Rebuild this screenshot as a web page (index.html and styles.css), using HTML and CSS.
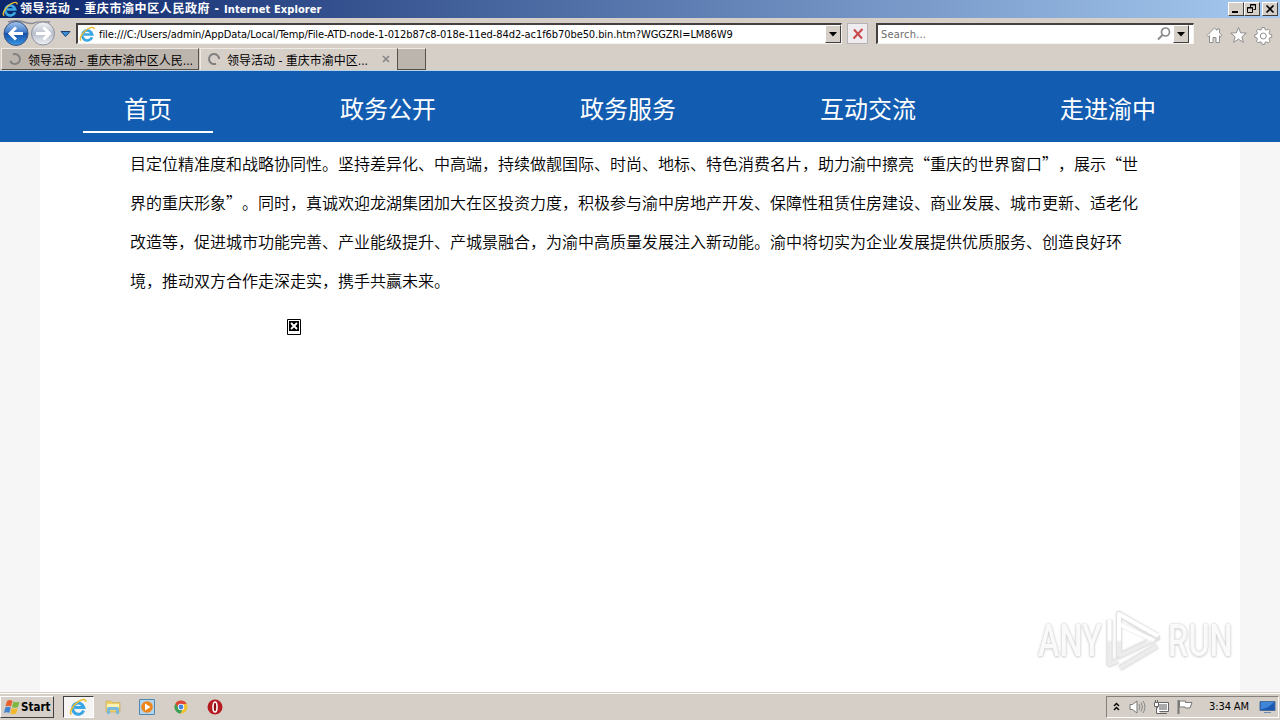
FILE: index.html
```
<!DOCTYPE html>
<html lang="zh-CN">
<head>
    <meta charset="UTF-8">
    <title>领导活动 - 重庆市渝中区人民政府</title>
    <link rel="stylesheet" href="styles.css">
</head>
<body>
    <svg width="0" height="0" class="defs">
        <defs>
            <linearGradient id="blue" x1="0" y1="0" x2="0" y2="1">
                <stop offset="0" stop-color="#a9c8ee"/>
                <stop offset=".45" stop-color="#3c78c8"/>
                <stop offset=".5" stop-color="#1650a8"/>
                <stop offset="1" stop-color="#3a9ae6"/>
            </linearGradient>
            <linearGradient id="silver" x1="0" y1="0" x2="0" y2="1">
                <stop offset="0" stop-color="#f4f5f8"/>
                <stop offset=".5" stop-color="#b9bfcc"/>
                <stop offset="1" stop-color="#eef1f6"/>
            </linearGradient>
            <symbol id="ie" viewBox="0 0 16 16">
                <path d="M13 11.200A5 5 0 1 1 13.200 8.500H5" fill="none" stroke="#3aa6e4" stroke-width="2.700"/>
                <path d="M2.200 14.600C-.6 13 3.600 6 8.600 3 12 .9 15.200.6 15 3.400" fill="none" stroke="#f0bd2c" stroke-width="1.400"/>
            </symbol>
        </defs>
    </svg>

    <div class="titlebar">
        <svg class="ie-icon" width="16" height="16"><use href="#ie"/></svg>
        <span class="title">领导活动 - 重庆市渝中区人民政府 - <span class="app-name">Internet Explorer</span></span>
        <div class="window-buttons">
            <span class="win-btn"><svg width="12" height="10"><path d="M2 8h6" stroke="#000" stroke-width="2"/></svg></span>
            <span class="win-btn"><svg width="12" height="10"><path d="M4.500 3.500v-3h5v5h-2M4 1h6M1.500 3.500h5v5h-5zM1 4h6" fill="none" stroke="#000"/></svg></span>
            <span class="win-btn close"><svg width="12" height="10"><path d="M2.500 1.500l7 7M9.500 1.500l-7 7" stroke="#000" stroke-width="1.700"/></svg></span>
        </div>
    </div>

    <div class="toolbar">
        <svg class="nav-arrows" width="76" height="30" viewBox="0 0 76 30">
            <path d="M8 4Q16 1.500 24 4t10 1 16-1" fill="none" stroke="#8a8a90" stroke-width="1.500"/>
            <circle cx="16" cy="15.500" r="12" fill="url(#blue)" stroke="#40547c"/>
            <path d="M23 15.500H11M16 9.500l-6 6 6 6" fill="none" stroke="#fff" stroke-width="3"/>
            <circle cx="43" cy="15.500" r="11.500" fill="url(#silver)" stroke="#8e929c"/>
            <path d="M36 15.500h12M43.500 9.500l6 6-6 6" fill="none" stroke="#fff" stroke-width="3"/>
            <path d="M61 13.500h9l-4.500 5z" fill="#3b8fd6" stroke="#1d3f70"/>
        </svg>
        <div class="address">
            <svg class="address-icon" width="16" height="16"><use href="#ie"/></svg>
            <span class="url">file:///C:/Users/admin/AppData/Local/Temp/File-ATD-node-1-012b87c8-018e-11ed-84d2-ac1f6b70be50.bin.htm?WGGZRI=LM86W9</span>
            <span class="drop"><svg width="8" height="5"><path d="M0 0h8L4 4.500z"/></svg></span>
        </div>
        <div class="stop"><svg width="12" height="12"><path d="M2 1.500l8 9M10.500 1L1.500 10.500" stroke="#c8484c" stroke-width="2" fill="none"/></svg></div>
        <div class="search">
            <span class="search-text">Search...</span>
            <svg width="14" height="14"><circle cx="8.500" cy="5" r="4" fill="#fff" stroke="#8a8a8a" stroke-width="1.700"/><path d="M5.500 8L1 12.500" stroke="#8a8a8a" stroke-width="2"/></svg>
            <span class="drop"><svg width="8" height="5"><path d="M0 0h8L4 4.500z"/></svg></span>
        </div>
        <svg class="tools" width="70" height="20" viewBox="0 0 70 20">
            <g fill="#fff" stroke="#8f8f8f" stroke-linejoin="round">
                <path d="M1 10.500L8.500 3l2.500 2.300V4h2.500v3.800L16 10.500l-1.200 1.200-1.300-1V17.500H10v-5H7v5H3.500v-6.800l-1.300 1z"/>
                <path d="M32.500 2.500l2.100 5.300 5.700.3-4.400 3.600 1.500 5.600-4.900-3.100-4.900 3.100 1.500-5.600-4.400-3.600 5.700-.3z"/>
                <path d="M56 2.500h2.500l.5 2 1.500.6 1.900-1 1.700 1.700-1 1.900.6 1.500 2 .5v2.500l-2 .5-.6 1.500 1 1.900-1.700 1.700-1.900-1-1.500.6-.5 2H56l-.5-2-1.500-.6-1.900 1-1.700-1.700 1-1.900-.6-1.500-2-.5V9.700l2-.5.6-1.500-1-1.900 1.700-1.700 1.900 1 1.500-.6z"/>
                <circle cx="57.300" cy="11" r="3"/>
            </g>
        </svg>
    </div>

    <div class="tabs">
        <div class="tab inactive">
            <svg width="14" height="14"><path d="M2.300 9A5 5 0 1 0 5 2.400" fill="none" stroke="#808080" stroke-width="2"/></svg>
            <span class="tab-title">领导活动 - 重庆市渝中区人民...</span>
        </div>
        <div class="tab active">
            <svg width="14" height="14"><path d="M9 11.600A5 5 0 1 1 12 7" fill="none" stroke="#808080" stroke-width="2"/></svg>
            <span class="tab-title">领导活动 - 重庆市渝中区...</span>
            <svg class="tab-close" width="8" height="8"><path d="M1 1l6 6M7 1L1 7" stroke="#888" stroke-width="1.700"/></svg>
        </div>
        <div class="new-tab"></div>
    </div>

    <div class="page">
        <nav>
            <ul>
                <li class="current"><a>首页</a></li>
                <li><a>政务公开</a></li>
                <li><a>政务服务</a></li>
                <li><a>互动交流</a></li>
                <li><a>走进渝中</a></li>
            </ul>
        </nav>
        <main>
            <p class="article">目定位精准度和战略协同性。坚持差异化、中高端，持续做靓国际、时尚、地标、特色消费名片，助力渝中擦亮“重庆的世界窗口”，展示“世<br>界的重庆形象”。同时，真诚欢迎龙湖集团加大在区投资力度，积极参与渝中房地产开发、保障性租赁住房建设、商业发展、城市更新、适老化<br>改造等，促进城市功能完善、产业能级提升、产城景融合，为渝中高质量发展注入新动能。渝中将切实为企业发展提供优质服务、创造良好环<br>境，推动双方合作走深走实，携手共赢未来。</p>
            <svg class="broken" width="14" height="16"><path d="M.5.500h13v15H.5z" fill="#fff" stroke="#000"/><path d="M2 2h10v10H2z"/><path d="M4 4l6 6M10 4l-6 6" stroke="#fff" stroke-width="1.800"/></svg>
        </main>
        <div class="watermark">
            <span>ANY</span>
            <svg width="60" height="64" viewBox="0 0 60 64" fill="none" stroke-linejoin="round">
                <linearGradient id="fade" gradientUnits="userSpaceOnUse" x1="0" y1="0" x2="0" y2="64">
                    <stop offset=".48" stop-color="#fff"/>
                    <stop offset=".52" stop-color="#ececec"/>
                </linearGradient>
                <g stroke="#e2e2e2" stroke-width="6">
                    <path d="M14 5v42l38-18zM14 5l38 22M4.500 11v44l8-3M15 59l37-22"/>
                </g>
                <g stroke="url(#fade)" stroke-width="4">
                    <path d="M14 47V5l39 22M14 15l34 16-34 16M4.500 11v44l8-3M15 59l37-22"/>
                </g>
            </svg>
            <span>RUN</span>
        </div>
    </div>

    <div class="taskbar">
        <div class="start">
            <svg width="17" height="16" viewBox="0 0 17 16">
                <path d="M3 2q3-2 5.500 0L7 7.500Q4.500 6 1.500 7.500z" fill="#e8602c"/>
                <path d="M9.500 2.500q3 1.700 6 0L14 8q-3 1.500-6 0z" fill="#7cb83c"/>
                <path d="M1.300 8.500q3-1.500 5.500 0L5.300 14Q3 12.500 0 14z" fill="#4285d0"/>
                <path d="M7.700 9q3 1.500 6 0l-1.500 5.500q-3 1.500-6 0z" fill="#f3b92c"/>
            </svg>
            <span>Start</span>
        </div>
        <div class="task-active"><svg width="18" height="18"><use href="#ie"/></svg></div>
        <svg class="launch" width="16" height="16">
            <path d="M1 2h5l1 1.500h8V13H1z" fill="#f0cf68" stroke="#c6a650" stroke-width=".6"/>
            <path d="M2 5h12v4H2z" fill="#fbf0b6"/>
            <path d="M2 15V9.500Q2 8 3.500 8h9Q14 8 14 9.500V15h-3v-4H5v4z" fill="#79b9dc"/>
        </svg>
        <svg class="launch" width="16" height="16">
            <path d="M.5.500h15v15H.5z" fill="#b4d4ea" stroke="#4d88b5"/>
            <circle cx="8" cy="8" r="5.800" fill="#ef861c"/><path d="M6 4.500v7L11.500 8z" fill="#fff"/>
        </svg>
        <svg class="launch" width="16" height="16">
            <circle cx="8" cy="8" r="6.500" fill="#f2c12e"/>
            <path d="M2.400 4.700A6.500 6.500 0 0 1 13.600 4.700L8 5.500 5.500 9z" fill="#dc4437"/>
            <path d="M2.400 4.700A6.500 6.500 0 0 0 7.500 14.500L10 9.500 6 9.500z" fill="#3b9d57"/>
            <circle cx="8" cy="8" r="3.200" fill="#fff"/><circle cx="8" cy="8" r="2.400" fill="#4682e0"/>
        </svg>
        <svg class="launch" width="16" height="16">
            <circle cx="8" cy="8" r="7.500" fill="#b51b20"/><ellipse cx="8" cy="8" rx="2" ry="5" fill="#8d0c12" stroke="#fff" stroke-width="1.600"/>
        </svg>
        <div class="tray">
            <svg class="chevrons" width="7" height="9"><path d="M1 4l2.500-2.500L6 4M1 8l2.500-2.500L6 8" fill="none" stroke="#000" stroke-width="1.400"/></svg>
            <svg class="sound" width="17" height="16"><path d="M1 5.500h2.500L8 2v12l-4.500-3.500H1z" fill="#fff" stroke="#777"/><path d="M10 5q2 3 0 6M12 3.500q3 4.500 0 9M14 2q4 6 0 12" fill="none" stroke="#888"/></svg>
            <svg class="network" width="17" height="16"><path d="M4.500 3.500h11v9h-11z" fill="#fff" stroke="#666"/><path d="M6 5h8v6H6z" fill="#aaa"/><path d="M1.500 3.500h4v4h-4zM2.500 1v2.500M4.500 1v2.500M3.500 7.500v7h4M7 14.500h7" fill="#fff" stroke="#666"/></svg>
            <svg class="flag" width="16" height="16"><path d="M1.500 1v14" stroke="#777" stroke-width="2"/><path d="M2.500 2h6v1.500h6.500l-2 5.500H8.500L8 8H2.500z" fill="#fff" stroke="#777"/></svg>
            <span class="clock">3:34 AM</span>
            <svg class="desktop" width="17" height="14"><path d="M1 1.500h15v9H1z" fill="#1c57b0" stroke="#486ca0"/><path d="M2 9.500Q10 8 15 2H2z" fill="#3f86d8"/><path d="M5 12.500h7" stroke="#6c8bb0"/></svg>
        </div>
    </div>
</body>
</html>
```
FILE: styles.css
```
* {
    box-sizing: border-box;
}
body {
    margin: 0;
    width: 1280px;
    height: 720px;
    overflow: hidden;
    display: flex;
    flex-direction: column;
    background-color: #d5cfc8;
    color: #000;
    font-family: "DejaVu Sans Condensed", "Noto Sans CJK SC", sans-serif;
    font-size: 11px;
}
svg {
    display: block;
    flex: none;
}
.defs {
    position: absolute;
}
span {
    white-space: nowrap;
}
.titlebar {
    height: 18px;
    flex: none;
    display: flex;
    align-items: center;
    padding: 0 2px;
    background: linear-gradient(to right, #0b256b, #a6caf0);
    color: #fff;
}
.title {
    margin-left: 2px;
    font-weight: bold;
    font-size: 12px;
    line-height: 18px;
    letter-spacing: 0.6px;
}
.app-name {
    font-size: 11px;
    letter-spacing: 0.1px;
}
.window-buttons {
    margin-left: auto;
    display: flex;
}
.win-btn {
    width: 16px;
    height: 14px;
    padding: 1px;
    background-color: #d5cfc8;
    border: 1px solid;
    border-color: #fff #404040 #404040 #fff;
}
.close {
    margin-left: 2px;
}
.toolbar {
    height: 30px;
    flex: none;
    display: flex;
    align-items: flex-start;
}
.address, .search {
    display: flex;
    align-items: center;
    height: 21px;
    margin-top: 5px;
    background-color: #fff;
    border: 1px solid #f5f2ee;
    border-top: 2px solid #46403e;
    border-left: 2px solid #46403e;
}
.address {
    width: 766px;
    padding-left: 1px;
}
.url {
    margin-left: 4px;
    width: 635px;
    letter-spacing: -0.08px;
}
.drop {
    width: 16px;
    height: 18px;
    display: flex;
    align-items: center;
    justify-content: center;
    margin-left: auto;
    background-color: #d5cfc8;
    border: 1px solid;
    border-color: #fff #404040 #404040 #fff;
}
.stop {
    width: 21px;
    height: 21px;
    margin: 5px 0 0 5px;
    display: flex;
    align-items: center;
    justify-content: center;
    background-color: #eeecee;
    border: 1px solid #b5b3b8;
}
.search {
    width: 318px;
    margin-left: 8px;
    padding: 0 4px 0 3px;
}
.search-text {
    color: #6d6d6d;
    margin-right: auto;
    letter-spacing: 0.2px;
}
.search .drop {
    margin-left: 2px;
}
.tools {
    margin: 7px 0 0 12px;
}
.tabs {
    height: 23px;
    flex: none;
    display: flex;
    border-bottom: 1px solid #b5d3e8;
}
.tab {
    display: flex;
    align-items: center;
    height: 22px;
    font-size: 12px;
    border: 1px solid;
    border-color: #eeeae5 #55504c transparent #eeeae5;
}
.inactive {
    width: 198px;
    margin-left: 1px;
    padding-left: 6px;
    background-color: #bcb5ae;
    border-bottom-color: #55504c;
}
.active {
    width: 197px;
    margin-left: 1px;
    padding-left: 6px;
    border-right-color: transparent;
}
.tab-title {
    margin-left: 6px;
}
.tab-close {
    margin-left: auto;
    margin-right: 6px;
}
.new-tab {
    width: 29px;
    height: 22px;
    background-color: #bcb5ae;
    border: 1px solid #55504c;
    border-top-color: #eeeae5;
}
.page {
    position: relative;
    flex: 1;
    background-color: #f6f6f6;
    font-family: "Noto Sans CJK SC", sans-serif;
}
nav {
    height: 71px;
    padding-left: 28px;
    background-color: #125cb1;
}
nav ul {
    display: flex;
    list-style: none;
    margin: 0;
    padding: 0;
}
nav li {
    width: 240px;
    display: flex;
    justify-content: center;
}
nav a {
    width: 130px;
    height: 62px;
    padding-top: 7px;
    line-height: 60px;
    text-align: center;
    font-size: 24px;
    color: #fff;
}
.current a {
    border-bottom: 2px solid #fff;
}
main {
    width: 1200px;
    height: 550px;
    margin: 0 auto;
    padding: 2px 0 0 90px;
    background-color: #fff;
}
.article {
    margin: 0;
    font-size: 16px;
    font-weight: 350;
    line-height: 39px;
    white-space: nowrap;
    text-spacing-trim: space-all;
}
.broken {
    margin: 19px 0 0 157px;
}
/* stamp over the lower right corner of the page */
.watermark {
    position: absolute;
    right: 48px;
    bottom: 19px;
    display: flex;
    align-items: center;
    color: #fafafa;
    font-family: Roboto, sans-serif;
    font-weight: 500;
    font-size: 45px;
    line-height: 64px;
    text-shadow: 0 0 3px #c8c8c8, 0 1px 3px #d4d4d4;
}
.watermark span {
    width: 64px;
    transform: scaleX(.72);
    transform-origin: left;
}
.watermark svg {
    margin: 0 3px;
    filter: drop-shadow(0 0 1px #ddd);
}
.taskbar {
    height: 28px;
    flex: none;
    display: flex;
    align-items: center;
    padding: 1px 1px 1px 0;
    border-top: 1px solid #d5cfc8;
    box-shadow: inset 0 1px #fff;
}
.start {
    width: 54px;
    height: 22px;
    display: flex;
    align-items: center;
    padding-left: 3px;
    border: 1px solid;
    border-color: #fff #404040 #404040 #fff;
    font-weight: bold;
    font-size: 11.5px;
}
.task-active {
    width: 31px;
    height: 22px;
    margin-left: 9px;
    padding: 1px 0 0 5px;
    background-color: #f7f5f3;
    border: 1px solid;
    border-color: #404040 #fff #fff #404040;
}
.launch {
    margin-left: 18px;
}
.task-active + .launch {
    margin-left: 11px;
}
.tray {
    width: 173px;
    height: 22px;
    margin-left: auto;
    display: flex;
    align-items: center;
    padding-left: 6px;
    border: 1px solid;
    border-color: #86817c #fff #fff #86817c;
}
.sound {
    margin-left: 9px;
}
.network {
    margin-left: 7px;
}
.flag {
    margin-left: 7px;
}
.clock {
    width: 41px;
    margin-left: 16px;
    letter-spacing: -0.1px;
}
.desktop {
    margin-left: 9px;
}
```
